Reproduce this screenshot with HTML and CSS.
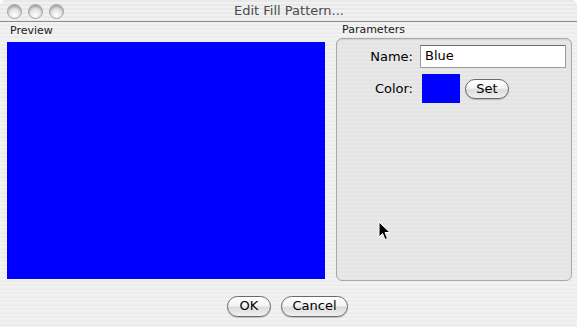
FILE: index.html
```html
<!DOCTYPE html>
<html>
<head>
<meta charset="utf-8">
<link rel="stylesheet" href="styles.css">
</head>
<body>
<div class="window">
  <div class="titlebar">
    <div class="lights">
      <span class="light"></span><span class="light"></span><span class="light"></span>
    </div>
    <div class="title">Edit Fill Pattern...</div>
  </div>
  <div class="content">
    <div class="col-preview">
      <div class="label">Preview</div>
      <div class="preview"></div>
    </div>
    <div class="col-params">
      <div class="label params-label">Parameters</div>
      <div class="params-box">
        <div class="form">
          <div class="flabel">Name:</div>
          <div class="input">Blue</div>
          <div class="flabel">Color:</div>
          <div class="color-row">
            <div class="swatch"></div>
            <div class="btn btn-set">Set</div>
          </div>
        </div>
      </div>
    </div>
  </div>
  <div class="footer">
    <div class="btn btn-ok">OK</div>
    <div class="btn btn-cancel">Cancel</div>
  </div>
  <svg class="cursor" width="14" height="22" viewBox="0 0 14 22">
    <path d="M1 1 L1 16 L4.5 12.5 L7 18.5 L9.5 17.5 L7 11.5 L12 11.5 Z" fill="#000" stroke="#fff" stroke-width="1"/>
  </svg>
</div>
</body>
</html>
```
FILE: styles.css
```css
html, body {
  margin: 0;
  padding: 0;
  background: #ffffff;
}
body {
  font-family: "DejaVu Sans", "Liberation Sans", sans-serif;
  color: #000;
}
.window {
  position: relative;
  width: 577px;
  height: 327px;
  border-radius: 6px 6px 0 0;
  overflow: hidden;
  background: repeating-linear-gradient(to bottom, #ededed 0px, #ededed 2px, #f2f2f2 2px, #f2f2f2 4px);
  display: flex;
  flex-direction: column;
}
.titlebar {
  height: 21px;
  border-bottom: 1px solid #8c8c8c;
  display: flex;
  align-items: flex-start;
  position: relative;
  background: repeating-linear-gradient(to bottom, #e9e9e9 0px, #e9e9e9 2px, #f1f1f1 2px, #f1f1f1 4px);
}
.lights {
  display: flex;
  gap: 6px;
  padding-left: 7px;
  padding-top: 4px;
}
.light {
  width: 15px;
  height: 15px;
  border-radius: 50%;
  border: 1px solid #a0a0a0;
  box-sizing: border-box;
  background: radial-gradient(circle at 50% 78%, #ffffff 0%, #e6e6e6 45%, #bdbdbd 100%);
  box-shadow: inset 0 2px 2px rgba(0,0,0,0.2);
}
.title {
  position: absolute;
  left: 0;
  right: 0;
  top: 3px;
  text-align: center;
  font-size: 13px;
  color: #4a4a4a;
  padding-left: 1px;
}
.content {
  display: flex;
  padding: 0 5px 0 7px;
  height: 259px;
}
.col-preview {
  width: 318px;
  display: flex;
  flex-direction: column;
}
.label {
  font-size: 11px;
  color: #1a1a1a;
  padding-left: 3px;
  height: 20px;
  line-height: 18px;
}
.preview {
  width: 318px;
  height: 237px;
  background: #0000ff;
}
.col-params {
  margin-left: 11px;
  width: 236px;
  display: flex;
  flex-direction: column;
}
.params-label {
  height: 16px;
  line-height: 16px;
  padding-left: 6px;
}
.params-box {
  height: 241px;
  border: 1px solid #a8a8a8;
  border-radius: 6px;
  background: repeating-linear-gradient(to bottom, #e4e4e4 0px, #e4e4e4 2px, #e8e8e8 2px, #e8e8e8 4px);
  box-shadow: inset 0 1px 1px rgba(0,0,0,0.08);
  padding-top: 6px;
  box-sizing: content-box;
}
.form {
  display: grid;
  grid-template-columns: 76px 146px;
  column-gap: 7px;
  row-gap: 6px;
  align-items: center;
}
.flabel {
  text-align: right;
  font-size: 13px;
}
.input {
  height: 23px;
  box-sizing: border-box;
  background: #fff;
  border: 1px solid #9c9c9c;
  border-top-color: #6f6f6f;
  font-size: 13px;
  line-height: 20px;
  padding-left: 4px;
}
.color-row {
  display: flex;
  align-items: center;
  gap: 5px;
  padding-left: 2px;
}
.swatch {
  width: 38px;
  height: 29px;
  background: #0000ff;
}
.btn {
  height: 20px;
  box-sizing: border-box;
  border: 1px solid #6a6a6a;
  border-radius: 10px;
  background: linear-gradient(to bottom, #ffffff 0%, #f4f4f4 45%, #dcdcdc 55%, #f0f0f0 100%);
  font-size: 13px;
  line-height: 18px;
  text-align: center;
  box-shadow: 0 1px 1px rgba(0,0,0,0.2);
}
.btn-set { width: 44px; }
.footer {
  display: flex;
  justify-content: center;
  gap: 10px;
  padding-top: 15px;
  padding-right: 2px;
}
.btn-ok { width: 44px; height: 21px; border-radius: 11px; }
.btn-cancel { width: 67px; height: 21px; border-radius: 11px; }
.cursor {
  position: absolute;
  left: 378px;
  top: 221px;
}
```
